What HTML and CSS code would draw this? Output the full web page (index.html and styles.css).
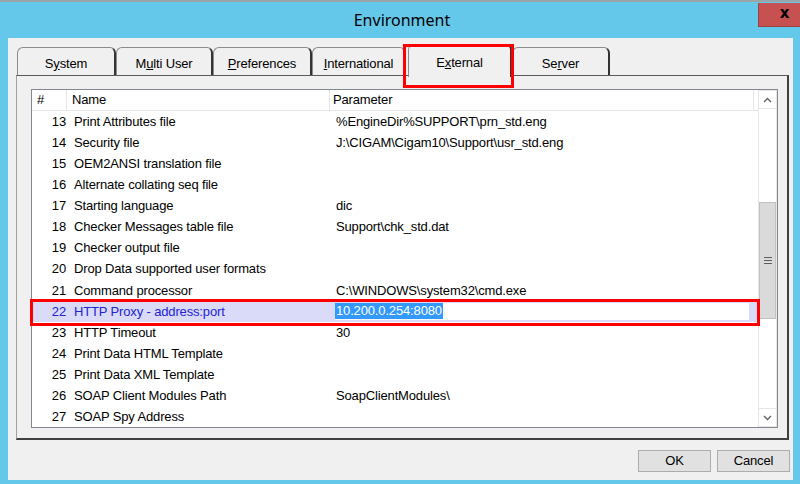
FILE: index.html
```html
<!DOCTYPE html>
<html lang="en">
<head>
    <meta charset="UTF-8">
    <title>Environment</title>
    <link rel="stylesheet" href="styles.css">
</head>
<body>
    <div class="window">
        <div class="titlebar">
            <span class="title">Environment</span>
            <span class="close">x</span>
        </div>
        <div class="client">
            <div class="tabs">
                <div class="tab w-system">S<u>y</u>stem</div>
                <div class="tab w-multi">M<u>u</u>lti User</div>
                <div class="tab w-pref"><u>P</u>references</div>
                <div class="tab w-intl"><u>I</u>nternational</div>
                <div class="tab active w-ext">E<u>x</u>ternal</div>
                <div class="tab w-server">Se<u>r</u>ver</div>
            </div>
            <div class="panel">
                <div class="list">
                    <div class="content">
                        <div class="header">
                            <div class="hcell c-num">#</div>
                            <div class="hcell c-name">Name</div>
                            <div class="hcell c-param">Parameter</div>
                        </div>
                        <div class="rows">
                            <div class="row"><span class="num">13</span><span class="name">Print Attributes file</span><span class="param">%EngineDir%SUPPORT\prn_std.eng</span></div>
                            <div class="row"><span class="num">14</span><span class="name">Security file</span><span class="param">J:\CIGAM\Cigam10\Support\usr_std.eng</span></div>
                            <div class="row"><span class="num">15</span><span class="name">OEM2ANSI translation file</span><span class="param"></span></div>
                            <div class="row"><span class="num">16</span><span class="name">Alternate collating seq file</span><span class="param"></span></div>
                            <div class="row"><span class="num">17</span><span class="name">Starting language</span><span class="param">dic</span></div>
                            <div class="row"><span class="num">18</span><span class="name">Checker Messages table file</span><span class="param">Support\chk_std.dat</span></div>
                            <div class="row"><span class="num">19</span><span class="name">Checker output file</span><span class="param"></span></div>
                            <div class="row"><span class="num">20</span><span class="name">Drop Data supported user formats</span><span class="param"></span></div>
                            <div class="row"><span class="num">21</span><span class="name">Command processor</span><span class="param">C:\WINDOWS\system32\cmd.exe</span></div>
                            <div class="row selected"><span class="num">22</span><span class="name">HTTP Proxy - address:port</span><span class="param"><span class="edit"><span class="sel">10.200.0.254:8080</span></span></span></div>
                            <div class="row"><span class="num">23</span><span class="name">HTTP Timeout</span><span class="param">30</span></div>
                            <div class="row"><span class="num">24</span><span class="name">Print Data HTML Template</span><span class="param"></span></div>
                            <div class="row"><span class="num">25</span><span class="name">Print Data XML Template</span><span class="param"></span></div>
                            <div class="row"><span class="num">26</span><span class="name">SOAP Client Modules Path</span><span class="param">SoapClientModules\</span></div>
                            <div class="row"><span class="num">27</span><span class="name">SOAP Spy Address</span><span class="param"></span></div>
                        </div>
                    </div>
                    <div class="scrollbar">
                        <div class="arrow">
                            <svg width="9" height="6" viewBox="0 0 9 6"><polyline points="1,5 4.5,1.5 8,5" fill="none" stroke="#606060" stroke-width="1.3"/></svg>
                        </div>
                        <div class="track">
                            <div class="thumb"><span class="grip"></span></div>
                        </div>
                        <div class="arrow">
                            <svg width="9" height="6" viewBox="0 0 9 6"><polyline points="1,1 4.5,4.5 8,1" fill="none" stroke="#606060" stroke-width="1.3"/></svg>
                        </div>
                    </div>
                </div>
            </div>
            <div class="buttons">
                <div class="btn">OK</div>
                <div class="btn">Cancel</div>
            </div>
        </div>
    </div>
</body>
</html>
```

FILE: styles.css
```css
body {
    margin: 0;
    font-family: "Liberation Sans", Arial, sans-serif;
    font-size: 13px;
    letter-spacing: -0.15px;
    color: #000;
}

.window {
    width: 800px;
    height: 484px;
    box-sizing: border-box;
    border-top: 2px solid #9aa5aa;
    background: #64c8eb;
    display: flex;
    flex-direction: column;
    overflow: hidden;
}

/* title bar */
.titlebar {
    height: 36px;
    display: grid;
    grid-template-columns: 1fr auto 1fr;
}
.title {
    grid-column: 2;
    font-family: "Noto Sans", sans-serif;
    font-size: 16px;
    letter-spacing: 0;
    line-height: 36px;
    padding-left: 4px;
}
.close {
    grid-column: 3;
    justify-self: end;
    align-self: start;
    margin-top: 1px;
    width: 42px;
    height: 24px;
    box-sizing: border-box;
    background: #c75050;
    border-left: 1px solid #9c4040;
    border-bottom: 1px solid #9c4040;
    font-family: "DejaVu Sans", sans-serif;
    font-weight: bold;
    font-size: 15px;
    line-height: 20px;
    text-align: center;
    padding-left: 10px;
}

/* dialog body */
.client {
    margin: 0 7px 4px 8px;
    flex: 1;
    background: #f0f0f0;
    padding: 6px 4px 0 8px;
    display: flex;
    flex-direction: column;
}

.tabs {
    display: flex;
    align-items: flex-end;
    height: 31px;
    padding-left: 1px;
    position: relative;
    z-index: 1;
}
.tab {
    height: 28px;
    box-sizing: border-box;
    border: 1px solid #8c8c8c;
    border-right: 2px solid #333;
    border-bottom: none;
    border-radius: 6px 6px 0 0;
    background: #f0f0f0;
    text-align: center;
    padding-top: 3px;
    line-height: 26px;
}
.tab.active {
    height: 33px;
    margin-bottom: -2px;
    margin-left: 2px;
    padding-top: 5px;
    position: relative;
}
.tab.active::after {
    content: "";
    position: absolute;
    left: -6px;
    right: -4px;
    top: -1px;
    bottom: -11px;
    border: 3px solid #ff0000;
}
.w-system { width: 99px; }
.w-multi { width: 97px; }
.w-pref { width: 99px; }
.w-intl { width: 94px; }
.w-ext { width: 104px; }
.w-server { width: 98px; }

.panel {
    height: 365px;
    box-sizing: border-box;
    border-top: 1px solid #5a5a5a;
    border-left: 1px solid #a0a0a0;
    border-right: 2px solid #404040;
    border-bottom: 2px solid #404040;
    padding: 13px 9px 10px 14px;
}

.list {
    height: 339px;
    box-sizing: border-box;
    border: 1px solid #828790;
    background: #fff;
    display: flex;
}
.content {
    width: 726px;
    display: flex;
    flex-direction: column;
}
.header {
    height: 20px;
    display: flex;
    border-bottom: 1px solid #e5e5e5;
}
.hcell {
    box-sizing: border-box;
    border-right: 1px solid #e5e5e5;
    line-height: 19px;
}
.hcell.c-num { width: 35px; padding-left: 5px; }
.hcell.c-name { width: 263px; padding-left: 5px; }
.hcell.c-param { width: 424px; padding-left: 3px; }

.rows {
    flex: 1;
    display: grid;
    grid-auto-rows: 1fr;
}
.row {
    display: flex;
    align-items: center;
    position: relative;
}
.num {
    width: 35px;
    box-sizing: border-box;
    text-align: right;
    padding-right: 1px;
}
.name {
    width: 263px;
    box-sizing: border-box;
    padding-left: 7px;
}
.param {
    flex: 1;
    padding-left: 6px;
}

.row.selected {
    background: #dadaf9;
    color: #2323d6;
}
.row.selected .param {
    padding-left: 5px;
    align-self: stretch;
    display: flex;
    align-items: center;
}
.row.selected::after {
    content: "";
    position: absolute;
    left: -2px;
    right: -2px;
    top: -2px;
    bottom: -4px;
    border: 3px solid #ff0000;
}
.edit {
    width: 414px;
    height: 17px;
    background: #fff;
    display: flex;
    align-items: center;
}
.sel {
    background: #3399ff;
    color: #fff;
    padding: 0 1px;
    line-height: 16px;
}

/* scrollbar */
.scrollbar {
    width: 19px;
    display: flex;
    flex-direction: column;
    background: #fff;
    border-left: 1px solid #e6e6e6;
    border-right: 1px solid #e6e6e6;
    box-sizing: border-box;
}
.arrow {
    height: 19px;
    box-sizing: border-box;
    border-top: 1px solid #e6e6e6;
    border-bottom: 1px solid #e6e6e6;
    display: flex;
    align-items: center;
    justify-content: center;
}
.track {
    flex: 1;
    padding-top: 93px;
}
.thumb {
    height: 117px;
    box-sizing: border-box;
    background: #dadada;
    border: 1px solid #c2c2c2;
    display: flex;
    align-items: center;
    justify-content: center;
}
.grip {
    width: 8px;
    height: 7px;
    background: repeating-linear-gradient(#606060 0 1px, transparent 1px 3px);
}

/* buttons */
.buttons {
    display: flex;
    justify-content: flex-end;
    gap: 6px;
    margin-top: 10px;
    margin-right: -1px;
}
.btn {
    width: 73px;
    height: 22px;
    box-sizing: border-box;
    background: #e1e1e1;
    border: 1px solid #adadad;
    text-align: center;
    line-height: 20px;
}
```
